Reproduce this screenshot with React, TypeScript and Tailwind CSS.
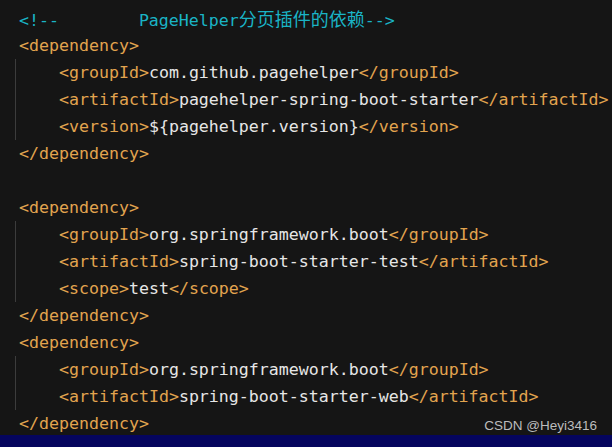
import React from "react";

type Seg = { t: string; c: "tag" | "txt" | "com" };

const tag = (t: string): Seg => ({ t, c: "tag" });
const txt = (t: string): Seg => ({ t, c: "txt" });

const cls: Record<string, string> = {
  tag: "text-[#e2a44f]",
  txt: "text-[#e6e6e6]",
  com: "text-[#1ab4c6]",
};

function Line({ segs }: { segs: Seg[] }) {
  return (
    <div className="h-[27px] leading-[27px] whitespace-pre">
      {segs.map((s, i) => (
        <span key={i} className={cls[s.c]}>
          {s.t}
        </span>
      ))}
    </div>
  );
}

function el(name: string, value: string): Seg[] {
  return [tag(`<${name}>`), txt(value), tag(`</${name}>`)];
}

function Block({ children }: { children: React.ReactNode }) {
  return <div className="ml-[-4px] border-l border-[#3c3c3c] pl-[43px]">{children}</div>;
}

export default function App() {
  return (
    <div className="relative w-[612px] h-[447px] flex flex-col bg-[#151515] overflow-hidden">
      <div
        className="flex-1 overflow-hidden pt-[5px] pl-[19px] text-[16.6px]"
        style={{ fontFamily: '"DejaVu Sans Mono", "Noto Sans CJK SC", monospace' }}
      >
        <div className="h-[27px] leading-[27px] whitespace-pre text-[#1ab4c6]">
          {"<!--        PageHelper"}
          <span style={{ fontFamily: '"Noto Sans CJK SC", sans-serif' }} className="text-[18px] leading-[27px]">
            分页插件的依赖
          </span>
          {"-->"}
        </div>
        <Line segs={[tag("<dependency>")]} />
        <Block>
          <Line segs={el("groupId", "com.github.pagehelper")} />
          <Line segs={el("artifactId", "pagehelper-spring-boot-starter")} />
          <Line segs={el("version", "${pagehelper.version}")} />
        </Block>
        <Line segs={[tag("</dependency>")]} />
        <Line segs={[txt(" ")]} />
        <Line segs={[tag("<dependency>")]} />
        <Block>
          <Line segs={el("groupId", "org.springframework.boot")} />
          <Line segs={el("artifactId", "spring-boot-starter-test")} />
          <Line segs={el("scope", "test")} />
        </Block>
        <Line segs={[tag("</dependency>")]} />
        <Line segs={[tag("<dependency>")]} />
        <Block>
          <Line segs={el("groupId", "org.springframework.boot")} />
          <Line segs={el("artifactId", "spring-boot-starter-web")} />
        </Block>
        <Line segs={[tag("</dependency>")]} />
      </div>
      <div className="h-[12px] bg-[#05055e]" />
      <div
        className="absolute right-[15px] bottom-[12px] text-[13.5px] leading-[18px] text-[#bcbcbc]"
        style={{ fontFamily: '"Liberation Sans", Arial, sans-serif' }}
      >
        CSDN @Heyi3416
      </div>
    </div>
  );
}
